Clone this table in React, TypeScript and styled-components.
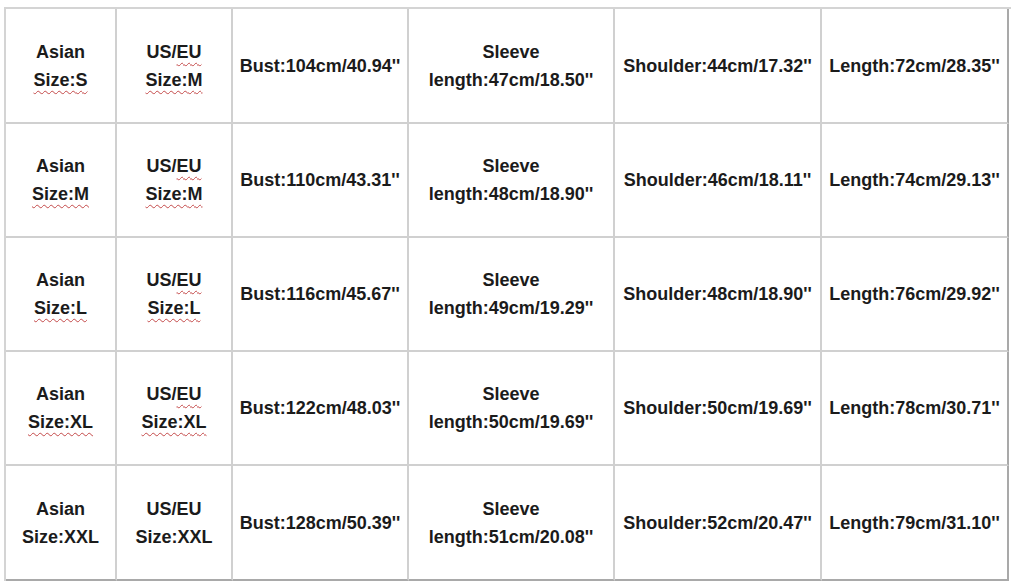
import styled, {createGlobalStyle} from "styled-components";

const GlobalStyle = createGlobalStyle`
    html, body {
        margin: 0;
        padding: 0;
        background: #ffffff;
    }
`;

type SizeRow = {
    asian: string;
    us: string;
    bust: string;
    sleeve: string;
    shoulder: string;
    length: string;
    marked: boolean;
};

const rows: Array<SizeRow> = [
    {asian: "S", us: "M", bust: "104cm/40.94''", sleeve: "47cm/18.50''", shoulder: "44cm/17.32''", length: "72cm/28.35''", marked: true},
    {asian: "M", us: "M", bust: "110cm/43.31''", sleeve: "48cm/18.90''", shoulder: "46cm/18.11''", length: "74cm/29.13''", marked: true},
    {asian: "L", us: "L", bust: "116cm/45.67''", sleeve: "49cm/19.29''", shoulder: "48cm/18.90''", length: "76cm/29.92''", marked: true},
    {asian: "XL", us: "XL", bust: "122cm/48.03''", sleeve: "50cm/19.69''", shoulder: "50cm/19.69''", length: "78cm/30.71''", marked: true},
    {asian: "XXL", us: "XXL", bust: "128cm/50.39''", sleeve: "51cm/20.08''", shoulder: "52cm/20.47''", length: "79cm/31.10''", marked: false},
];

export default function App() {
    return <>
        <GlobalStyle/>
        <Table>
            {rows.map((row, index) => {
                const last = index === rows.length - 1;
                return <Row key={index} $tall={index === 0 || last}>
                    <Cell>
                        <Line>Asian</Line>
                        <Line><Squiggle $on={row.marked}>Size:{row.asian}</Squiggle></Line>
                    </Cell>
                    <Cell>
                        <Line>US/<Squiggle $on={row.marked}>EU</Squiggle></Line>
                        <Line><Squiggle $on={row.marked}>Size:{row.us}</Squiggle></Line>
                    </Cell>
                    <Cell>Bust:{row.bust}</Cell>
                    <Cell>
                        <Line>Sleeve</Line>
                        <Line>length:{row.sleeve}</Line>
                    </Cell>
                    <Cell>Shoulder:{row.shoulder}</Cell>
                    <Cell $edge>Length:{row.length}</Cell>
                </Row>
            })}
        </Table>
    </>
}

const Table = styled.div`
    margin: 7px 0 0 4px;
    width: 1005px;
    display: flex;
    flex-direction: column;
    border-top: 2px solid #d4d4d4;
    border-left: 2px solid #d4d4d4;
    font-family: "Liberation Sans", Arial, sans-serif;
    font-weight: bold;
    font-size: 18px;
    color: #1b1b1b;
`;

const Row = styled.div<{ $tall: boolean }>`
    display: grid;
    grid-template-columns: 111px 116px 176px 206px 207px 187px;
    height: ${(props) => props.$tall ? 115 : 114}px;

    &:last-child > div {
        border-bottom-color: #a9a9a9;
    }
`;

const Cell = styled.div<{ $edge?: boolean }>`
    display: flex;
    flex-direction: column;
    align-items: center;
    justify-content: center;
    text-align: center;
    line-height: 28px;
    white-space: nowrap;
    border-right: 2px solid ${(props) => props.$edge ? '#a9a9a9' : '#d0d0d0'};
    border-bottom: 2px solid #d0d0d0;
`;

const Line = styled.span`
    display: block;
`;

const Squiggle = styled.span<{ $on: boolean }>`
    text-decoration: ${(props) => props.$on ? 'underline wavy #c44a4a' : 'none'};
    text-decoration-thickness: 1px;
    text-underline-offset: 4px;
`;
